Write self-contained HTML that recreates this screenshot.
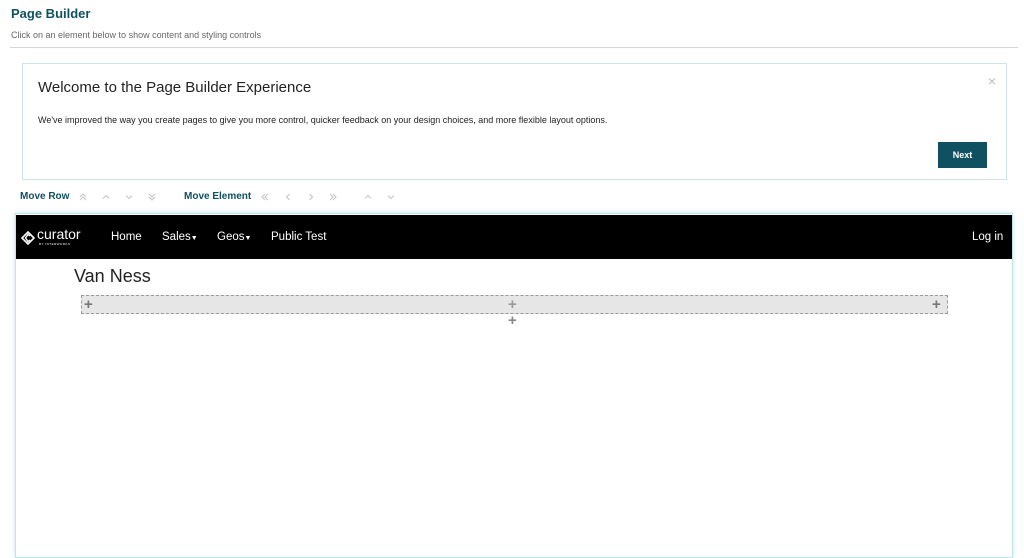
<!DOCTYPE html>
<html><head><meta charset="utf-8"><style>
*{margin:0;padding:0;box-sizing:border-box}
body{width:1024px;height:554px;overflow:hidden;background:#fff;font-family:"Liberation Sans",sans-serif;position:relative}
.abs{position:absolute}
svg.ch{position:absolute;top:192px}
svg.ch path{fill:none;stroke:#c4c4c4;stroke-width:1.1}
</style></head><body>
<div class="abs" style="left:11px;top:6px;font-size:13px;font-weight:bold;color:#0f5161">Page Builder</div>
<div class="abs" style="left:11px;top:30px;font-size:9px;color:#666">Click on an element below to show content and styling controls</div>
<div class="abs" style="left:10px;top:47px;width:1008px;height:1px;background:#d6d6d6"></div>

<div class="abs" style="left:22px;top:63px;width:985px;height:117px;border:1px solid #cfe3ea;background:#fff">
  <div class="abs" style="left:15px;top:15px;font-size:15px;color:#222">Welcome to the Page Builder Experience</div>
  <div class="abs" style="left:15px;top:51px;font-size:9px;color:#222">We've improved the way you create pages to give you more control, quicker feedback on your design choices, and more flexible layout options.</div>
  <div class="abs" style="right:10px;top:9px;font-size:14px;color:#bbb">×</div>
  <div class="abs" style="left:915px;top:78px;width:49px;height:26px;background:#0f5161;color:#fff;font-size:9px;font-weight:bold;text-align:center;line-height:26px">Next</div>
</div>

<div class="abs" style="left:20px;top:191px;font-size:10px;font-weight:bold;color:#0f5161">Move Row</div>
<svg class="ch" style="left:78px" width="10" height="10"><path d="M2 5L5 2L8 5M2 8L5 5L8 8"/></svg>
<svg class="ch" style="left:101px" width="10" height="10"><path d="M2 6.5L5 3.5L8 6.5"/></svg>
<svg class="ch" style="left:124px" width="10" height="10"><path d="M2 3.5L5 6.5L8 3.5"/></svg>
<svg class="ch" style="left:147px" width="10" height="10"><path d="M2 2L5 5L8 2M2 5L5 8L8 5"/></svg>
<div class="abs" style="left:184px;top:191px;font-size:10px;font-weight:bold;color:#0f5161">Move Element</div>
<svg class="ch" style="left:260px" width="10" height="10"><path d="M5 2L2 5L5 8M8 2L5 5L8 8"/></svg>
<svg class="ch" style="left:283px" width="10" height="10"><path d="M6.5 2L3.5 5L6.5 8"/></svg>
<svg class="ch" style="left:306px" width="10" height="10"><path d="M3.5 2L6.5 5L3.5 8"/></svg>
<svg class="ch" style="left:328px" width="10" height="10"><path d="M2 2L5 5L2 8M5 2L8 5L5 8"/></svg>
<svg class="ch" style="left:363px" width="10" height="10"><path d="M2 6.5L5 3.5L8 6.5"/></svg>
<svg class="ch" style="left:386px" width="10" height="10"><path d="M2 3.5L5 6.5L8 3.5"/></svg>

<div class="abs" style="left:15px;top:213px;width:998px;height:345px;border:1px solid #bfe6ea;box-shadow:0 0 4px #bfe6ea;background:#fff">
  <div class="abs" style="left:0;top:1px;width:996px;height:44px;background:#000">
    <svg class="abs" style="left:5px;top:16px" width="14" height="14" viewBox="0 0 14 14"><path d="M7 1L13 7L7 13L1 7Z" fill="none" stroke="#fff" stroke-width="1.6"/><path d="M9 5L7 3.5L4.5 7L7 10.5L9 9" fill="none" stroke="#fff" stroke-width="1.4"/></svg>
    <div class="abs" style="left:21px;top:11px;font-size:14px;color:#fff">curator</div>
    <div class="abs" style="left:23px;top:27px;font-size:3px;color:#fff;letter-spacing:.5px">BY INTERWORKS</div>
    <div class="abs" style="left:95px;top:16px;font-size:11.5px;color:#fff">Home</div>
    <div class="abs" style="left:146px;top:16px;font-size:11.5px;color:#fff">Sales<span style="font-size:7px">▼</span></div>
    <div class="abs" style="left:201px;top:16px;font-size:11.5px;color:#fff">Geos<span style="font-size:7px">▼</span></div>
    <div class="abs" style="left:255px;top:16px;font-size:11.5px;color:#fff">Public Test</div>
    <div class="abs" style="left:956px;top:16px;font-size:11.5px;color:#fff">Log in</div>
  </div>
  <div class="abs" style="left:58px;top:52px;font-size:18px;color:#222">Van Ness</div>
  <div class="abs" style="left:65px;top:81px;width:867px;height:19px;border:1px dashed #999;background:#e6e6e6"></div>
  <div class="abs" style="left:68px;top:82px;font-size:15px;font-weight:bold;color:#777">+</div>
  <div class="abs" style="left:492px;top:82px;font-size:15px;font-weight:bold;color:#999">+</div>
  <div class="abs" style="left:916px;top:82px;font-size:15px;font-weight:bold;color:#777">+</div>
  <div class="abs" style="left:492px;top:98px;font-size:15px;font-weight:bold;color:#888">+</div>
</div>
</body></html>
